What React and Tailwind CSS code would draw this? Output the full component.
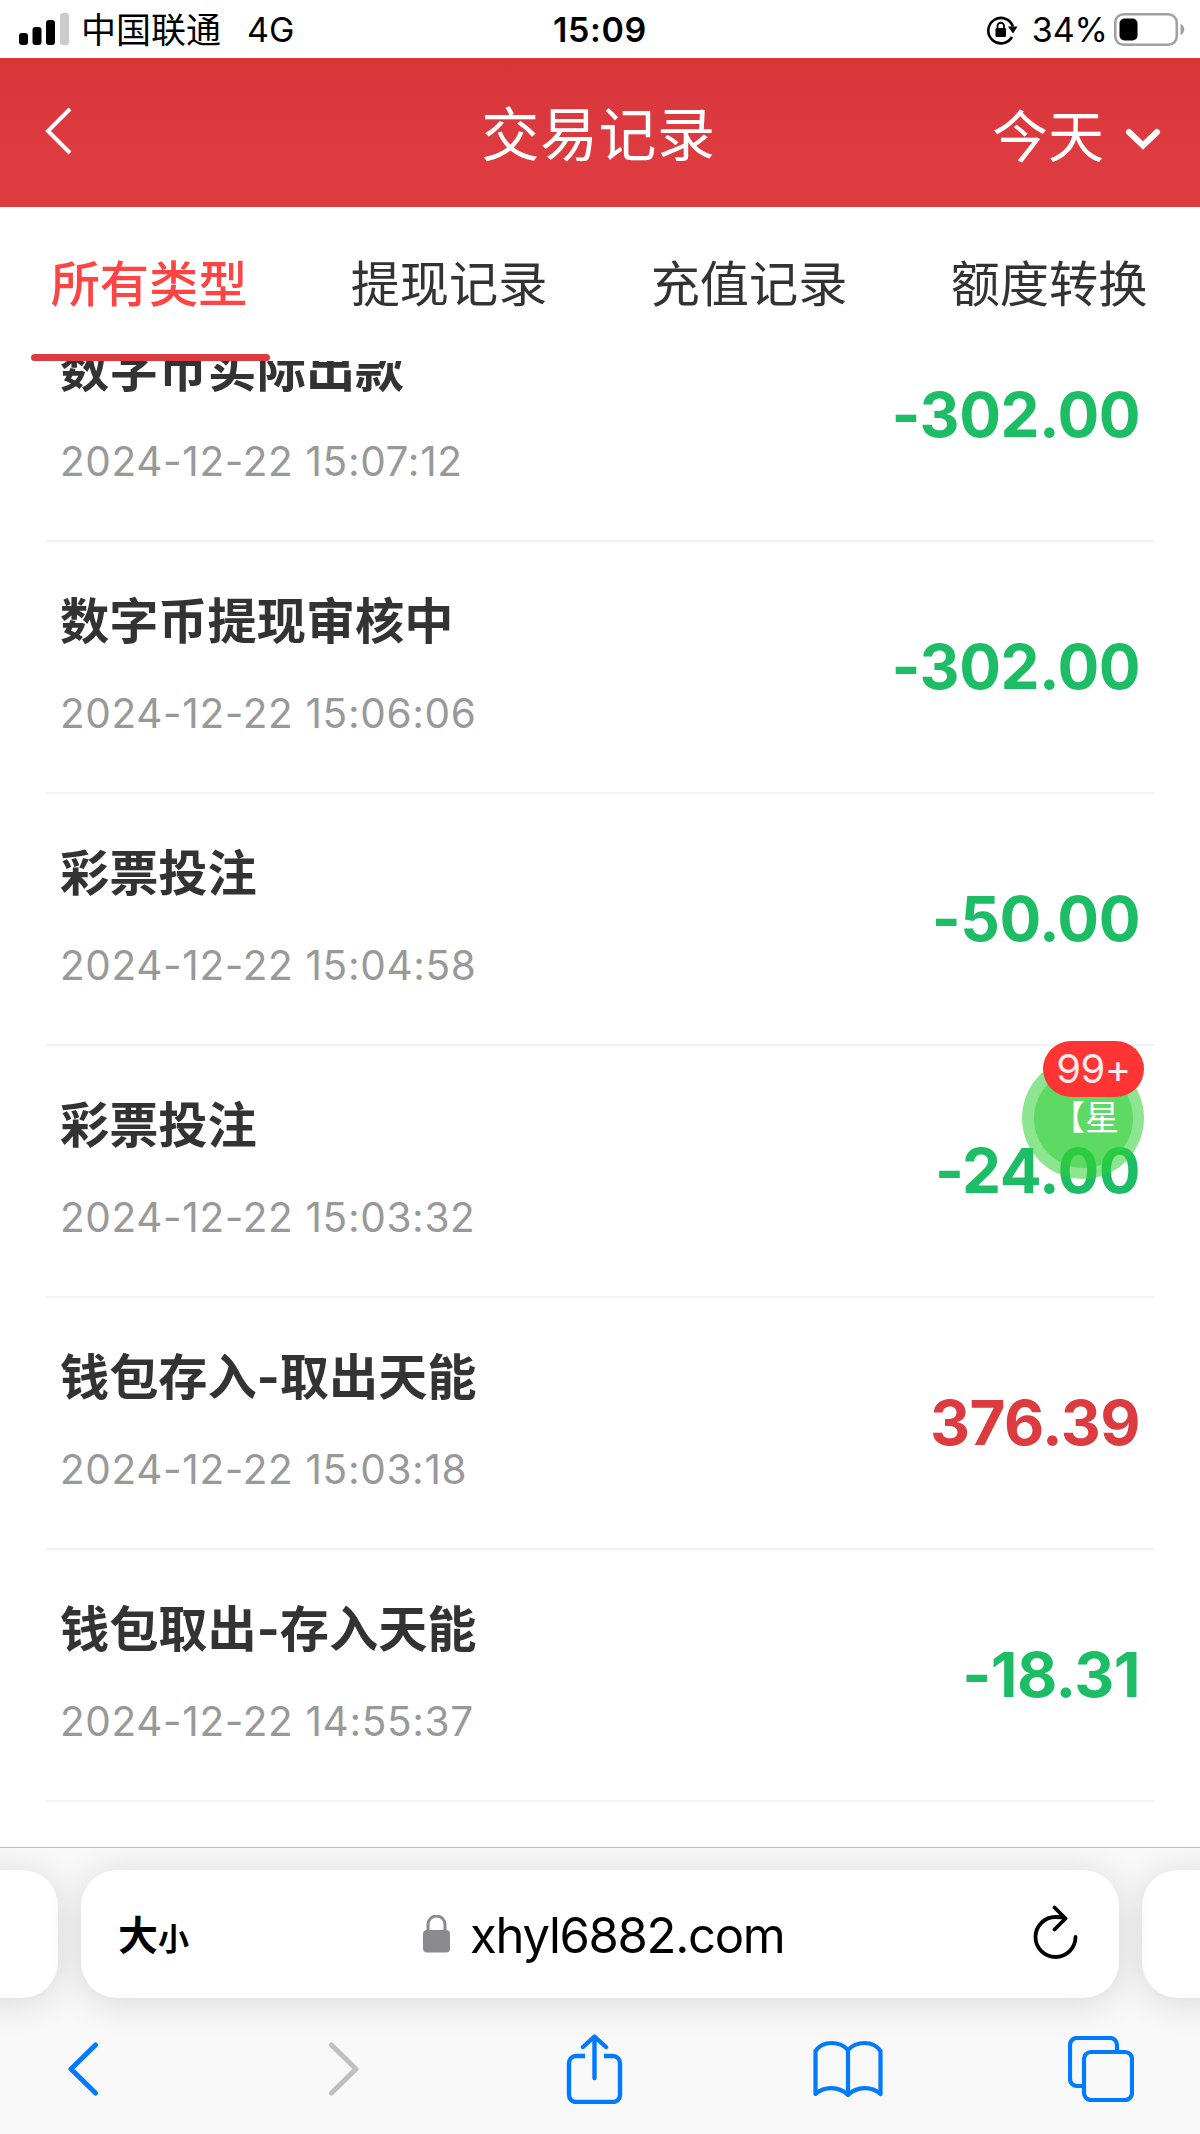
import React, { useState } from 'react'

const TABS = ['所有类型', '提现记录', '充值记录', '额度转换']

const RECORDS = [
  { title: '数字币实际出款', time: '2024-12-22 15:07:12', amount: '-302.00' },
  { title: '数字币提现审核中', time: '2024-12-22 15:06:06', amount: '-302.00' },
  { title: '彩票投注', time: '2024-12-22 15:04:58', amount: '-50.00' },
  { title: '彩票投注', time: '2024-12-22 15:03:32', amount: '-24.00' },
  { title: '钱包存入-取出天能', time: '2024-12-22 15:03:18', amount: '376.39' },
  { title: '钱包取出-存入天能', time: '2024-12-22 14:55:37', amount: '-18.31' },
]

function StatusBar() {
  return (
    <div className="relative flex h-[58px] items-center justify-between bg-white pt-[2px] pl-[19px] pr-[15px] text-[34px] leading-none text-black">
      <div className="flex items-center">
        <svg className="-mt-[2px]" width="50" height="32" viewBox="0 0 50 32">
          <rect x="0" y="20" width="9" height="12" rx="3" />
          <rect x="13.5" y="14" width="9" height="18" rx="3" />
          <rect x="27" y="7" width="9" height="25" rx="3" />
          <rect x="41" y="0" width="9" height="32" rx="3" fill="#cbcbcb" />
        </svg>
        <span className="ml-[12px] text-[35px]">中国联通</span>
        <span className="ml-[26px]">4G</span>
      </div>
      <span className="absolute left-1/2 -translate-x-1/2 font-semibold tracking-[0.6px]">15:09</span>
      <div className="flex items-center">
        {/* Rotation lock */}
        <svg width="32" height="30" viewBox="0 0 32 30" fill="none" stroke="#000" strokeWidth="2.6">
          <path d="M26 22A12.7 12.7 0 1 1 27 11.5" />
          <path d="M22 11.5h9.5l-4.5 7z" fill="#000" stroke="none" />
          <rect x="9.5" y="13" width="10.5" height="9" rx="1.2" fill="#000" stroke="none" />
          <path d="M11.5 14v-3a3.25 3.25 0 0 1 6.5 0v3" strokeWidth="1.8" />
        </svg>
        <span className="ml-[14px]">34%</span>
        <svg className="-mt-[2px] ml-[6px]" width="71" height="33" viewBox="0 0 71 33">
          <rect x="1.25" y="1.25" width="61.5" height="30.5" rx="8.5" fill="none" stroke="#a0a0a0" strokeWidth="2.5" />
          <rect x="5.5" y="5.5" width="18" height="22" rx="5" />
          <path d="M66.5 11c5 1.5 5 9.5 0 11z" fill="#a0a0a0" />
        </svg>
      </div>
    </div>
  )
}

function Header() {
  return (
    <div className="grid h-[149px] grid-cols-[1fr_auto_1fr] items-center bg-linear-to-b from-[#d83539] to-[#dd3b40] to-60% pl-[36px] pr-[39px] text-white">
      <svg className="-mt-[4px] ml-[9px]" width="28" height="48" viewBox="0 0 28 48" fill="none" stroke="currentColor" strokeWidth="4">
        <path d="M25 2 3 24l22 22" />
      </svg>
      <h1 className="mt-[4px] text-[58px] leading-none tracking-[0.6px]">交易记录</h1>
      <div className="mt-[9px] flex items-center justify-end gap-[21px]">
        <span className="text-[56px] leading-none">今天</span>
        <svg className="mt-[4px]" width="36" height="22" viewBox="0 0 36 22" fill="none" stroke="currentColor" strokeWidth="6" strokeLinecap="round">
          <path d="M4 4l14 13.500L32 4" />
        </svg>
      </div>
    </div>
  )
}

function RecordRow({ title, time, amount }) {
  return (
    <li className="flex h-[252px] shrink-0 items-center justify-between border-b-2 border-[#f1f1f4] px-[14px]">
      <div>
        <p className="-mt-[4px] text-[49.2px] leading-[60px] font-bold text-[#333]">{title}</p>
        <p className="mt-[38px] text-[40.5px] leading-[50px] tracking-[0.65px] text-[#999]">{time}</p>
      </div>
      <p className={`text-[62px] leading-none font-bold tracking-[-0.5px] ${amount.startsWith('-') ? 'text-[#1dbd66]' : 'text-[#dc3b40]'}`}>{amount}</p>
    </li>
  )
}

function AddressBar() {
  return (
    <div className="-mx-[50px] flex h-[128px] gap-[23px]">
      <div className="w-[108px] shrink-0 rounded-[36px] bg-white shadow-[0_4px_36px_rgba(0,0,0,0.13)]" />
      <div className="relative flex flex-1 items-center justify-between rounded-[36px] bg-white pl-[37px] pr-[41px] text-black shadow-[0_4px_36px_rgba(0,0,0,0.13)]">
        <p className="mt-[3px] flex items-baseline font-bold leading-none">
          <span className="text-[40px]">大</span>
          <span className="text-[31px]">小</span>
        </p>
        <div className="absolute left-[342px] flex items-center">
          <svg width="27" height="38" viewBox="0 0 27 38">
            <rect y="15" width="27" height="22.5" rx="4" fill="#8a8a8f" />
            <path d="M5 17v-7.5a8.5 8.5 0 0 1 17 0V17" fill="none" stroke="#8a8a8f" strokeWidth="3" />
          </svg>
          <span className="mt-[2px] ml-[20px] text-[49px] leading-none tracking-[-1.3px]">xhyl6882.com</span>
        </div>
        <svg className="-mt-[4px]" width="45" height="55" viewBox="0 0 45 55" fill="none" stroke="#000" strokeWidth="3.8" strokeLinecap="round" strokeLinejoin="round">
          <path d="M42.5 32A20 20 0 1 1 22.5 12c4 0 7 .3 9 1" />
          <path d="M21.5 2.5 32.5 13.500 21.5 24.500" />
        </svg>
      </div>
      <div className="w-[108px] shrink-0 rounded-[36px] bg-white shadow-[0_4px_36px_rgba(0,0,0,0.13)]" />
    </div>
  )
}

function BrowserBar() {
  return (
    <div className="relative h-[287px] overflow-hidden border-t border-[#bfbfc1] bg-[#f8f8f8] pt-[22px]">
      <AddressBar />
      <div className="mt-[34px] flex h-[73px] items-center justify-between pl-[48px] pr-[66px] text-[#007aff]">
        <svg width="70" height="54" viewBox="-18 0 70 54" fill="none" stroke="currentColor" strokeWidth="5" strokeLinecap="round" strokeLinejoin="round">
          <path d="M29.5 3 5 27l24.500 24" />
        </svg>
        <svg width="70" height="54" viewBox="-24 0 70 54" fill="none" stroke="#bfbfbf" strokeWidth="5" strokeLinecap="round" strokeLinejoin="round">
          <path d="M4.5 3 29 27 4.5 51" />
        </svg>
        <svg width="70" height="70" viewBox="-9 0 70 70" fill="none" stroke="currentColor" strokeWidth="4.4" strokeLinecap="round" strokeLinejoin="round">
          <path d="M18 22H9a7 7 0 0 0-7 7v32a7 7 0 0 0 7 7h37a7 7 0 0 0 7-7V29a7 7 0 0 0-7-7h-9" strokeLinecap="butt" />
          <path d="M27.5 44V3M16 13 27.5 2.5 39 13" />
        </svg>
        <svg width="70" height="58" viewBox="0 0 70 58" fill="none" stroke="currentColor" strokeWidth="4.2" strokeLinejoin="round">
          <path d="M35 10C27 1 10 0 2.5 11v43c9-8 23.5-8 32.5 1 9-9 23.5-9 32.500-1V11C60 0 43 1 35 10zv45" />
        </svg>
        <svg width="66" height="66" viewBox="0 0 66 66" fill="none" stroke="currentColor" strokeWidth="4.2">
          <path d="M16 50H9a7 7 0 0 1-7-7V9a7 7 0 0 1 7-7h33a7 7 0 0 1 7 7v7" />
          <rect x="16" y="16" width="48" height="48" rx="7" />
        </svg>
      </div>
    </div>
  )
}

export default function App() {
  const [active, setActive] = useState(0)

  return (
    <div className="flex h-[2134px] w-[1200px] flex-col overflow-hidden bg-white font-['Inter','Noto_Sans_CJK_SC',sans-serif]">
      <StatusBar />
      <Header />

      {/* Type tabs */}
      <div className="grid h-[154px] shrink-0 grid-cols-4">
        {TABS.map((tab, i) => (
          <button
            key={tab}
            onClick={() => setActive(i)}
            className={`flex flex-col items-center justify-between pt-[47px] pr-[2px] text-[49.2px] leading-[60px] ${i === active ? 'font-medium text-[#ff4444]' : 'text-[#333]'}`}
          >
            {tab}
            <span className={`ml-[3px] h-[7px] w-[239px] rounded-full ${i === active ? 'bg-[#dc3b40]' : ''}`} />
          </button>
        ))}
      </div>

      {/* Records, scrolled part of the way into the first one */}
      <div className="relative flex min-h-0 flex-1 flex-col">
        <ul className="flex min-h-0 flex-1 flex-col overflow-hidden px-[46px]">
          <li className="-mt-[71px] h-0" />
          {RECORDS.map(record => <RecordRow key={record.time} {...record} />)}
        </ul>

        {/* Floating chat bubble */}
        <div className="absolute top-[696px] right-[56px] flex size-[122px] items-center justify-center rounded-full bg-[#2fcf37]/55">
          <div className="flex size-[99px] items-center justify-center rounded-full bg-[#2fcf37]/50 pl-[4px] text-[34px] leading-none text-white">【星</div>
          <span className="absolute -top-[16px] right-0 flex h-[56px] w-[101px] items-center justify-center rounded-full bg-[#ff3535] text-[40px] tracking-[-0.5px] text-white/90">99+</span>
        </div>
      </div>

      <BrowserBar />
    </div>
  )
}
